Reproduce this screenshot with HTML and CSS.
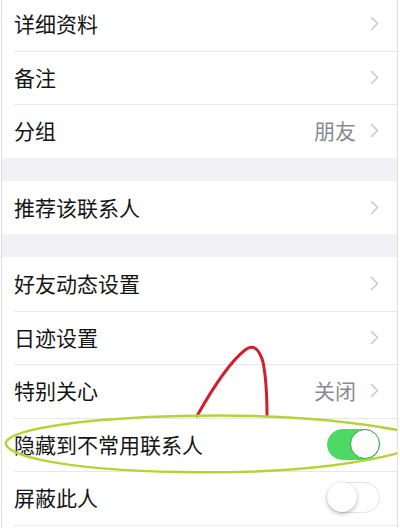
FILE: index.html
```html
<!DOCTYPE html>
<html>
  <head>
    <meta charset="utf-8">
    <title>资料设置</title>
    <link rel="stylesheet" href="styles.css">
  </head>
  <body>
    <div class="screen">
      <div class="group group-top">
        <div class="cell">
          <span class="label">详细资料</span>
          <span class="accessory"><svg class="chevron" viewBox="0 0 9 15"><path d="M1.5 1.5 L7.5 7.5 L1.5 13.5"/></svg></span>
        </div>
        <div class="cell">
          <span class="label">备注</span>
          <span class="accessory"><svg class="chevron" viewBox="0 0 9 15"><path d="M1.5 1.5 L7.5 7.5 L1.5 13.5"/></svg></span>
        </div>
        <div class="cell">
          <span class="label">分组</span>
          <span class="accessory"><span class="value">朋友</span><svg class="chevron" viewBox="0 0 9 15"><path d="M1.5 1.5 L7.5 7.5 L1.5 13.5"/></svg></span>
        </div>
      </div>

      <div class="gap"></div>

      <div class="group">
        <div class="cell">
          <span class="label">推荐该联系人</span>
          <span class="accessory"><svg class="chevron" viewBox="0 0 9 15"><path d="M1.5 1.5 L7.5 7.5 L1.5 13.5"/></svg></span>
        </div>
      </div>

      <div class="gap"></div>

      <div class="group group-open">
        <div class="cell">
          <span class="label">好友动态设置</span>
          <span class="accessory"><svg class="chevron" viewBox="0 0 9 15"><path d="M1.5 1.5 L7.5 7.5 L1.5 13.5"/></svg></span>
        </div>
        <div class="cell">
          <span class="label">日迹设置</span>
          <span class="accessory"><svg class="chevron" viewBox="0 0 9 15"><path d="M1.5 1.5 L7.5 7.5 L1.5 13.5"/></svg></span>
        </div>
        <div class="cell">
          <span class="label">特别关心</span>
          <span class="accessory"><span class="value">关闭</span><svg class="chevron" viewBox="0 0 9 15"><path d="M1.5 1.5 L7.5 7.5 L1.5 13.5"/></svg></span>
        </div>
        <div class="cell">
          <span class="label">隐藏到不常用联系人</span>
          <span class="switch on"><span class="knob"></span></span>
        </div>
        <div class="cell">
          <span class="label">屏蔽此人</span>
          <span class="switch"><span class="knob"></span></span>
        </div>
      </div>

      <!-- hand-drawn marks on top of the list -->
      <svg class="marks" viewBox="0 0 400 528">
        <path class="mark-red" d="M196 416 Q 224 366, 244 350 Q 256 341, 262 362 Q 266 382, 266 416"/>
        <path class="mark-green" d="M402 431 C 340 419, 260 414, 180 416 C 90 418, 12 428, 5 442 C 1 455, 60 470, 180 472 C 280 474, 350 466, 402 452"/>
      </svg>
    </div>
  </body>
</html>
```

FILE: styles.css
```css
:root {
  --bg: #f2f2f6;
  --cell: #ffffff;
  --text: #151515;
  --text-light: #8a8a8f;
  --separator: #e6e6ea;
  --chevron: #c7c7cc;
  --green: #4cd964;
}

* {
  margin: 0;
  padding: 0;
  box-sizing: border-box;
}

body {
  width: 400px;
  height: 528px;
  overflow: hidden;
  background: #ffffff;
  font-family: "Noto Sans CJK SC", "Noto Sans", sans-serif;
  color: var(--text);
}

.screen {
  position: relative;
  height: 528px;
  margin: 0 2px 0 1px;
  border-left: 1px solid #dedede;
  border-right: 1px solid #dedede;
  background: var(--cell);
  overflow: hidden;
}

.group {
  background: var(--cell);
}

.group-top {
  margin-top: -3px;
}

.gap {
  height: 23px;
  background: var(--bg);
}

.cell {
  position: relative;
  height: 53.5px;
  display: flex;
  align-items: center;
  justify-content: space-between;
  padding: 0 17px 0 12px;
}

.cell + .cell::before,
.group-open .cell:last-child::after {
  content: "";
  position: absolute;
  top: 0;
  left: 12px;
  right: 0;
  height: 1px;
  background: var(--separator);
}

.group-open .cell:last-child::after {
  top: auto;
  bottom: -1px;
}

.label {
  font-size: 21px;
  line-height: 1;
}

.accessory {
  display: flex;
  align-items: center;
  gap: 14px;
}

.value {
  font-size: 21px;
  line-height: 1;
  color: var(--text-light);
}

.chevron {
  width: 9px;
  height: 15px;
  margin-right: 1px;
}

.chevron path {
  fill: none;
  stroke: var(--chevron);
  stroke-width: 1.5;
  stroke-linecap: round;
  stroke-linejoin: round;
}

.switch {
  position: relative;
  width: 53px;
  height: 31px;
  border-radius: 16px;
  background: #ffffff;
  border: 1.5px solid #e4e4e8;
}

.switch .knob {
  position: absolute;
  top: -1px;
  left: -1px;
  width: 30px;
  height: 30px;
  border-radius: 50%;
  background: #ffffff;
  box-shadow: 0 2px 4px rgba(0, 0, 0, 0.25), 0 0 0 0.5px rgba(0, 0, 0, 0.08);
}

.switch.on {
  background: var(--green);
  border-color: var(--green);
}

.switch.on .knob {
  left: auto;
  right: -1px;
  border: 1.5px solid #3a9f50;
  box-shadow: none;
}

.marks {
  position: absolute;
  top: 0;
  left: -1px;
  width: 400px;
  height: 528px;
  pointer-events: none;
}

.mark-red {
  fill: none;
  stroke: #d21f2f;
  stroke-width: 3;
  stroke-linecap: round;
}

.mark-green {
  fill: none;
  stroke: #b5d336;
  stroke-width: 2.5;
  stroke-linecap: round;
}
```
